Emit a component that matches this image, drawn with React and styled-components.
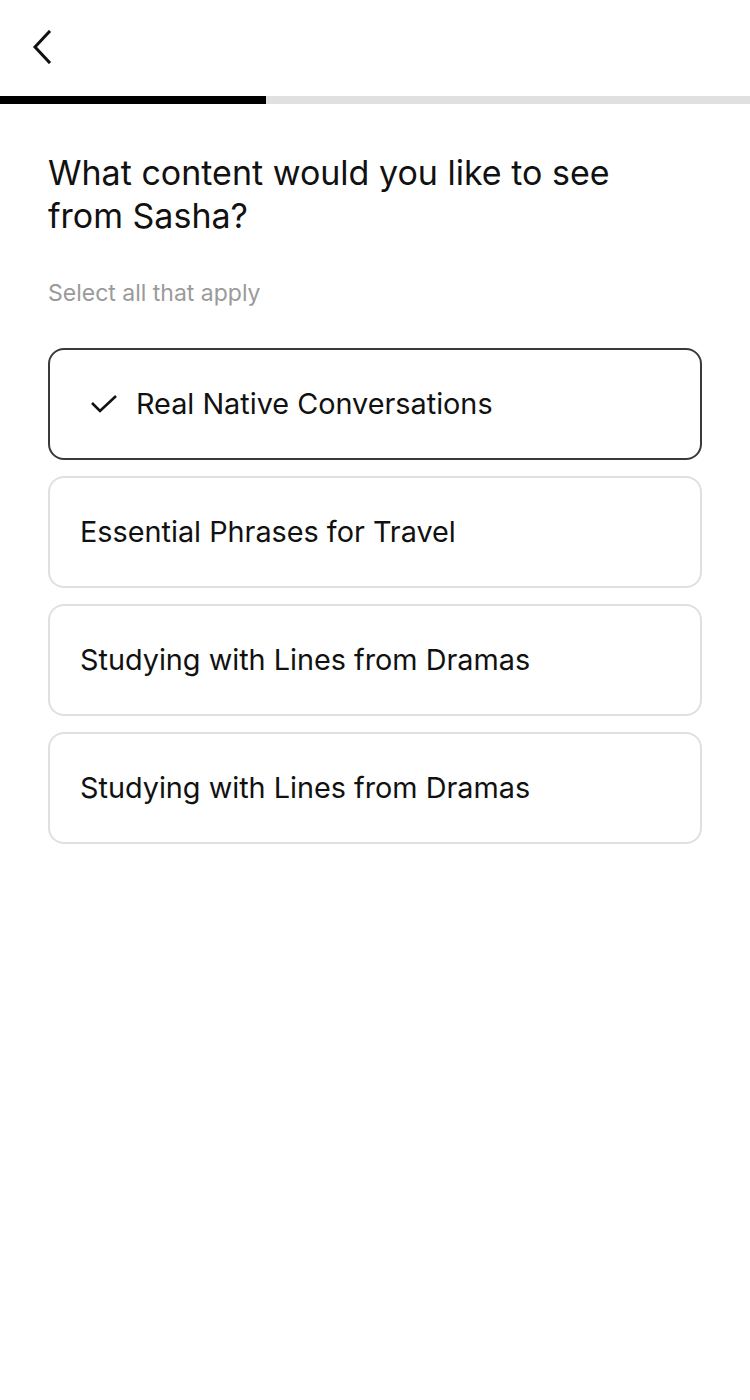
import React, { useState } from "react";
import styled, { createGlobalStyle } from "styled-components";

const GlobalStyle = createGlobalStyle`
  body {
    margin: 0;
    background: #ffffff;
    font-family: Inter, "Noto Sans", sans-serif;
    color: #111111;
  }
`;

const options = [
  "Real Native Conversations",
  "Essential Phrases for Travel",
  "Studying with Lines from Dramas",
  "Studying with Lines from Dramas",
];

export default function App() {
  const [selected, setSelected] = useState([0]);

  const toggle = (i) => {
    setSelected((s) => (s.includes(i) ? s.filter((x) => x !== i) : [...s, i]));
  };

  return (
    <Page>
      <GlobalStyle />
      <Header>
        <BackButton aria-label="Back">
          <svg width="20" height="34" viewBox="0 0 20 34" fill="none">
            <path
              d="M17 2 L3 17 L17 32"
              stroke="#111"
              strokeWidth="3"
              strokeLinecap="square"
              strokeLinejoin="miter"
            />
          </svg>
        </BackButton>
      </Header>
      <Progress>
        <ProgressFill style={{ width: "266px" }} />
      </Progress>
      <Body>
        <Heading>What content would you like to see from Sasha?</Heading>
        <Hint>Select all that apply</Hint>
        <List>
          {options.map((label, i) => {
            const on = selected.includes(i);
            return (
              <Option key={i} $active={on} onClick={() => toggle(i)}>
                {on && (
                  <Check width="28" height="20" viewBox="0 0 28 20" fill="none">
                    <path
                      d="M2 9 L10 17 L26 2"
                      stroke="#111"
                      strokeWidth="2.6"
                    />
                  </Check>
                )}
                <OptionLabel>{label}</OptionLabel>
              </Option>
            );
          })}
        </List>
      </Body>
    </Page>
  );
}

const Page = styled.div`
  width: 750px;
  min-height: 1400px;
  background: #fff;
`;

const Header = styled.div`
  height: 96px;
  display: flex;
  align-items: flex-start;
  padding: 30px 0 0 32px;
  box-sizing: border-box;
`;

const BackButton = styled.button`
  border: none;
  background: none;
  padding: 0;
  cursor: pointer;
  display: flex;
`;

const Progress = styled.div`
  height: 8px;
  background: #e0e0e0;
`;

const ProgressFill = styled.div`
  height: 100%;
  background: #000;
`;

const Body = styled.div`
  padding: 47px 48px 0;
`;

const Heading = styled.h1`
  margin: 0;
  font-size: 34px;
  line-height: 43px;
  font-weight: 400;
  color: #111;
  max-width: 620px;
`;

const Hint = styled.p`
  margin: 41px 0 0;
  font-size: 23px;
  line-height: 30px;
  color: #9a9a9a;
`;

const List = styled.div`
  margin-top: 40px;
  display: flex;
  flex-direction: column;
  gap: 16px;
`;

const Option = styled.div`
  height: 112px;
  box-sizing: border-box;
  border: 2px solid ${(p) => (p.$active ? "#3a3a3a" : "#e0e0e0")};
  border-radius: 16px;
  display: flex;
  align-items: center;
  padding: 0 0 0 ${(p) => (p.$active ? "40px" : "30px")};
  cursor: pointer;
`;

const Check = styled.svg`
  margin-right: 18px;
  flex-shrink: 0;
`;

const OptionLabel = styled.span`
  font-size: 28.8px;
  line-height: 36px;
  font-weight: 400;
  color: #111;
`;
